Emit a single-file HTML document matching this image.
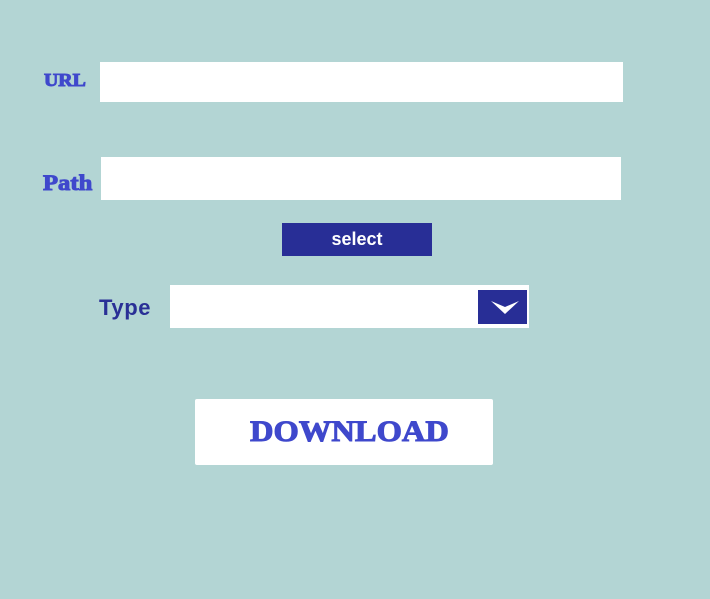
<!DOCTYPE html>
<html><head><style>
body{margin:0;width:710px;height:599px;background:#b3d5d4;position:relative;overflow:hidden;font-family:"Liberation Sans",sans-serif}
div{position:absolute}
.w{background:#fff}
.lbl{font-family:"Liberation Serif",serif;font-weight:bold;color:#3f48cc;-webkit-text-stroke:1px #3f48cc;transform-origin:left center;white-space:nowrap}
</style></head><body>
<div class="lbl" style="left:44px;top:70px;font-size:18px;transform:scaleX(1.1)">URL</div>
<div class="w" style="left:100px;top:62px;width:523px;height:40px"></div>
<div class="lbl" style="left:43px;top:170px;font-size:22px;transform:scaleX(1.12)">Path</div>
<div class="w" style="left:101px;top:157px;width:520px;height:43px"></div>
<div style="left:282px;top:223px;width:150px;height:33px;background:#282e96;color:#fff;font-weight:bold;font-size:18px;text-align:center;line-height:32px">select</div>
<div style="left:99px;top:295px;font-size:22px;font-weight:bold;color:#2a3096;letter-spacing:0.6px">Type</div>
<div class="w" style="left:170px;top:285px;width:359px;height:43px"></div>
<div style="left:478px;top:290px;width:49px;height:34px;background:#282e96"></div>
<svg style="position:absolute;left:0;top:0" width="710" height="599"><polygon points="491,301 505,307 519,301 505,314" fill="#fff"/></svg>
<div class="w" style="left:195px;top:399px;width:298px;height:66px;border-radius:2px"></div>
<div class="lbl" style="left:250px;top:415px;font-size:30px;transform:scaleX(1.085)">DOWNLOAD</div>
</body></html>
